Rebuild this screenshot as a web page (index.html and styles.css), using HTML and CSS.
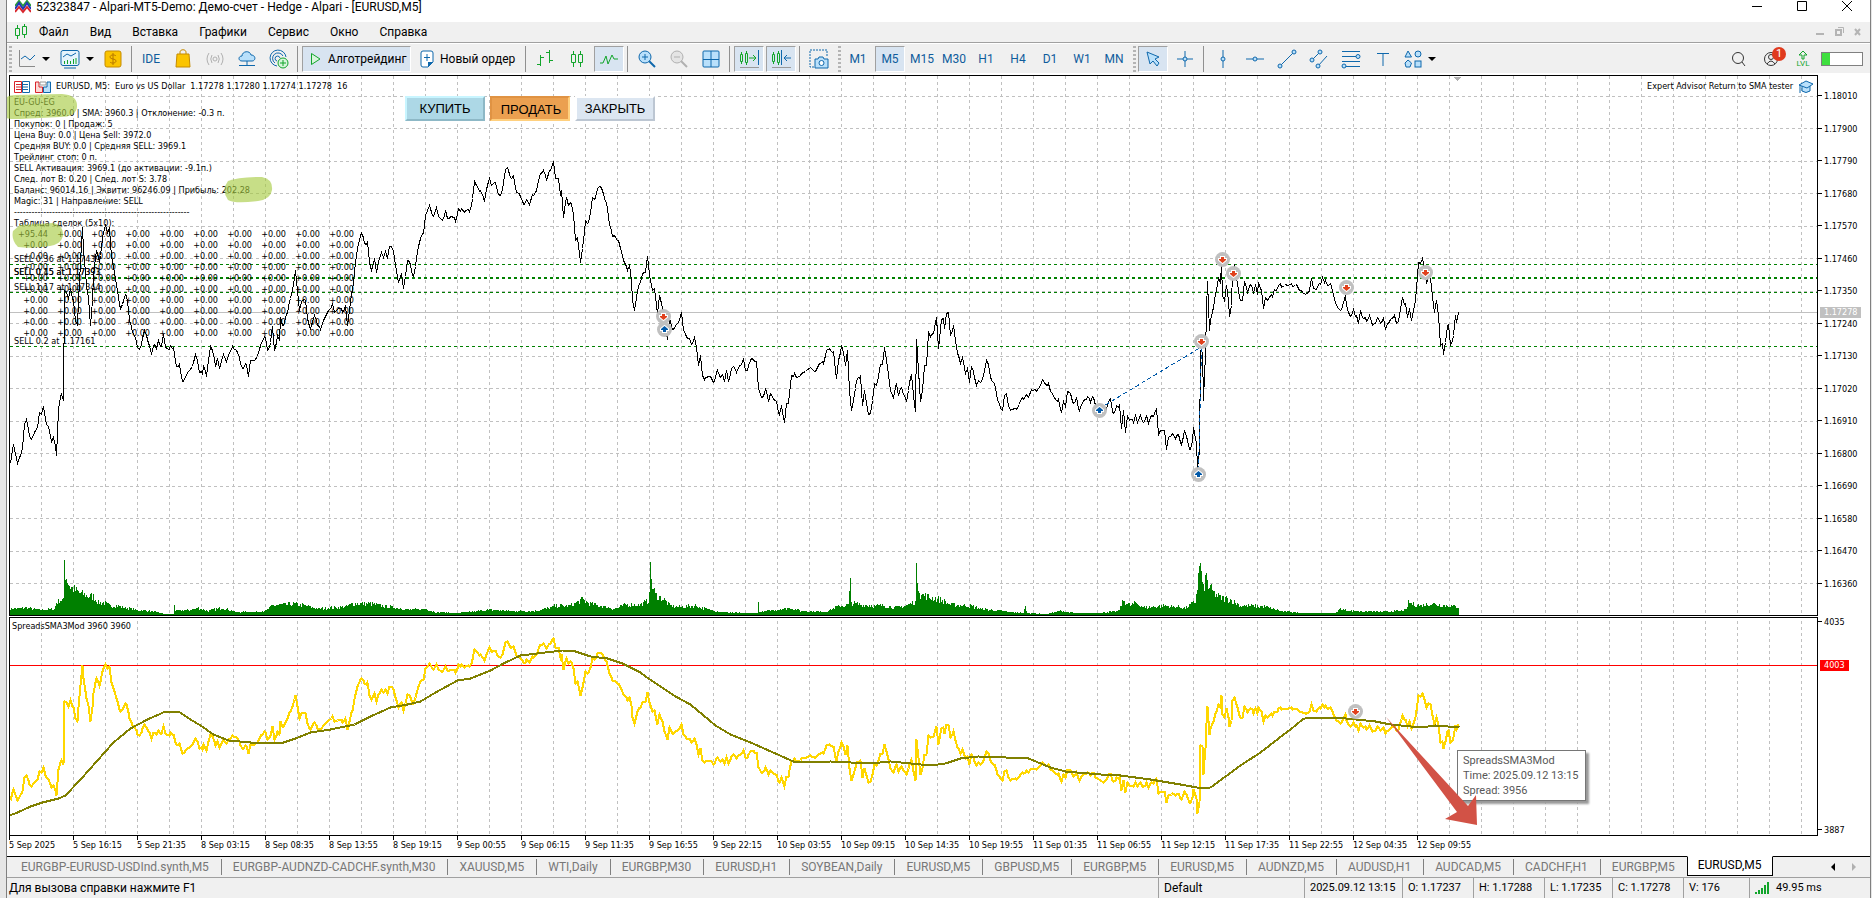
FILE: index.html
```html
<!DOCTYPE html>
<html lang="ru">
<head>
    <meta charset="UTF-8">
    <meta name="viewport" content="width=device-width, initial-scale=1.0">
    <title>52323847 - Alpari-MT5-Demo</title>
    <link rel="stylesheet" href="styles.css">
</head>
<body>
<div class="window">
    <header class="titlebar">
        <svg width="16" height="14" viewBox="0 0 16 14" fill="none" stroke-width="2">
            <path d="M0 6 L4 1 L8 6 L12 1 L16 6" stroke="#2a9d3a"/>
            <path d="M0 9 L4 3 L8 9 L12 3 L16 9" stroke="#2238b8"/>
            <path d="M0 12 L4 7 L8 12 L12 7 L16 12" stroke="#d8232a"/>
        </svg>
        <span class="title">52323847 - Alpari-MT5-Demo: Демо-счет - Hedge - Alpari - [EURUSD,M5]</span>
        <div class="window-buttons">
            <button type="button" aria-label="Свернуть"><svg width="12" height="12"><path d="M1 6.5H11" stroke="#000"/></svg></button>
            <button type="button" aria-label="Развернуть"><svg width="12" height="12"><path d="M1.500 1.500H10.500V10.500H1.500Z" stroke="#000" fill="none"/></svg></button>
            <button type="button" aria-label="Закрыть"><svg width="12" height="12"><path d="M1 1L11 11M11 1L1 11" stroke="#000"/></svg></button>
        </div>
    </header>

    <nav class="menu">
        <svg width="14" height="16" viewBox="0 0 14 16" fill="none" stroke="#12a52b"><path d="M3.500 1V4M3.500 12V15M1.500 4.500H5.500V11.500H1.500ZM10.500 0V2M10.500 11V14M8.500 2.500H12.500V10.500H8.500Z"/></svg>
        <a href="#">Файл</a>
        <a href="#">Вид</a>
        <a href="#">Вставка</a>
        <a href="#">Графики</a>
        <a href="#">Сервис</a>
        <a href="#">Окно</a>
        <a href="#">Справка</a>
        <svg class="mdi" width="48" height="12" viewBox="0 0 48 12" fill="none" stroke="#b4b4b4">
            <path d="M1 8H9" stroke-width="2"/>
            <path d="M21 4H26V9H21Z" stroke-width="2"/><path d="M23 1.500H28.500V7"/>
            <path d="M40 3L45 9M45 3L40 9" stroke-width="2"/>
        </svg>
    </nav>

    <div class="toolbar">
        <span class="grip"></span>
        <button type="button" class="drop" aria-label="Тип графика">
            <svg width="18" height="20" viewBox="0 0 18 20" fill="none"><path d="M1.500 1V17.500H17" stroke="#8a8a8a"/><path d="M3 10L7 7L12 11L17 6" stroke="#0f68ac"/></svg><i></i>
        </button>
        <button type="button" class="drop" aria-label="Индикаторы">
            <svg width="20" height="20" viewBox="0 0 20 20" fill="none"><rect x="1" y="1.500" width="18" height="15" rx="2" fill="#e6f3fc" stroke="#0f68ac"/><path d="M4 19H16" stroke="#0f68ac"/><path d="M3 8L7 5L11 7L16 4" stroke="#0f68ac"/><path d="M4.500 15V12M7.500 15V11M10.500 15V12M13.500 15V10M16 15V9" stroke="#12a52b"/></svg><i></i>
        </button>
        <button type="button" class="tool" aria-label="Депозит"><svg width="18" height="18" viewBox="0 0 18 18"><rect x="1" y="1" width="16" height="16" rx="2" fill="#fbc400" stroke="#c58b00"/><path d="M12 6C11 4.500 6 4.500 6 7C6 9.500 12 8.500 12 11C12 13.500 7 13.500 6 12M9 3V15" fill="none" stroke="#b57700"/></svg></button>
        <span class="sep"></span>
        <button type="button" class="tool label">IDE</button>
        <button type="button" class="tool" aria-label="Маркет"><svg width="16" height="20" viewBox="0 0 16 20"><path d="M5 7V3C5 0 11 0 11 3V7" fill="none" stroke="#c58b00"/><path d="M2 5H14L15 18H1Z" fill="#fbc400" stroke="#c58b00"/></svg></button>
        <button type="button" class="tool" aria-label="Сигналы"><svg width="18" height="14" viewBox="0 0 18 14" fill="none" stroke="#b0b0b0"><circle cx="9" cy="7" r="2"/><path d="M6 3Q3.500 7 6 11M12 3Q14.500 7 12 11M3 1Q-1 7 3 13M15 1Q19 7 15 13"/></svg></button>
        <button type="button" class="tool" aria-label="VPS"><svg width="18" height="18" viewBox="0 0 18 18" stroke="#0f68ac"><path d="M4 11C0 11 0 6 4 6C4 1 12 0 13 5C18 5 18 11 14 11Z" fill="#b9e0fb"/><path d="M9 11V15M1 15.500H17M7 15.500H11" fill="none"/></svg></button>
        <button type="button" class="tool" aria-label="Биржа"><svg width="20" height="20" viewBox="0 0 20 20" fill="none" stroke="#0f68ac"><path d="M8 17A8 8 0 1 1 17 8M6 14A5.500 5.500 0 1 1 14 7M8 12A2.500 2.500 0 1 1 11 9"/><circle cx="14" cy="14" r="5" fill="#d8f5dc" stroke="#12a52b"/><path d="M11 14H17M14 11V17" stroke="#12a52b"/></svg></button>
        <span class="sep"></span>
        <button type="button" class="wide active"><svg width="12" height="14" viewBox="0 0 12 14"><path d="M1.500 1.500L10 7L1.500 12.500Z" fill="#d8f5dc" stroke="#12a52b"/></svg>Алготрейдинг</button>
        <button type="button" class="wide"><svg width="14" height="18" viewBox="0 0 14 18"><path d="M1 3Q1 1 3 1H11Q13 1 13 3V12L8 17H3Q1 17 1 15Z" fill="#fff" stroke="#0f68ac"/><path d="M8 17V12H13Z" fill="#0f68ac"/><path d="M4 7.500H10M7 4V11" stroke="#0f68ac"/></svg>Новый ордер</button>
        <span class="sep"></span>
        <button type="button" class="tool" aria-label="Бары"><svg width="18" height="20" viewBox="0 0 18 20" fill="none" stroke="#12a52b"><path d="M4.500 6V17M1 15.500H4M5 8.500H8M13.500 1V14M10 3.500H13M14 11.500H17"/></svg></button>
        <button type="button" class="tool" aria-label="Свечи"><svg width="14" height="18" viewBox="0 0 14 18" fill="none" stroke="#12a52b"><path d="M3.500 1V4M3.500 13V17M1.500 4.500H5.500V12.500H1.500ZM10.500 1V4M10.500 13V17M8.500 4.500H12.500V12.500H8.500Z"/></svg></button>
        <button type="button" class="tool active" aria-label="Линия"><svg width="18" height="14" viewBox="0 0 18 14" fill="none" stroke="#12a52b"><path d="M0 11H3L6 4L8 12L12 3L14 7H18"/></svg></button>
        <span class="sep"></span>
        <button type="button" class="tool" aria-label="Увеличить"><svg width="18" height="18" viewBox="0 0 18 18" stroke="#0f68ac"><path d="M11 11L17 17" stroke-width="2"/><circle cx="7" cy="7" r="6" fill="#b9e0fb"/><path d="M4 7H10M7 4V10"/></svg></button>
        <button type="button" class="tool" aria-label="Уменьшить"><svg width="18" height="18" viewBox="0 0 18 18" stroke="#b0b0b0"><path d="M11 11L17 17" stroke-width="2"/><circle cx="7" cy="7" r="6" fill="#e4e4e4"/><path d="M4 7H10"/></svg></button>
        <button type="button" class="tool" aria-label="Окна"><svg width="18" height="18" viewBox="0 0 18 18" stroke="#0f68ac"><rect x="1" y="1" width="16" height="16" rx="1" fill="#b9e0fb"/><path d="M1 9.500H17M9 1V17"/></svg></button>
        <span class="sep"></span>
        <button type="button" class="tool active" aria-label="Автопрокрутка"><svg width="20" height="20" viewBox="0 0 20 20" fill="none"><path d="M1.500 5.500H3.500V12.500H1.500ZM2.500 3V5M2.500 13V15M6.500 4.500H8.500V13.500H6.500ZM7.500 2V4M7.500 14V16M10 9H17M14 6L17 9L14 12" stroke="#12a52b"/><path d="M19.500 1V16" stroke="#0f68ac"/><path d="M1 18.500H20" stroke="#999"/></svg></button>
        <button type="button" class="tool active" aria-label="Сдвиг"><svg width="20" height="20" viewBox="0 0 20 20" fill="none"><path d="M1.500 5.500H3.500V12.500H1.500ZM2.500 3V5M2.500 13V15M6.500 4.500H8.500V13.500H6.500ZM7.500 2V4M7.500 14V16" stroke="#12a52b"/><path d="M10.500 1V16M13 9H20M16 6L13 9L16 12" stroke="#0f68ac"/><path d="M1 18.500H20" stroke="#999"/></svg></button>
        <span class="sep"></span>
        <button type="button" class="tool" aria-label="Снимок"><svg width="20" height="20" viewBox="0 0 20 20" fill="none" stroke="#0f68ac"><path d="M5 18H1V1H18V7" stroke-dasharray="2 1"/><path d="M6 10H9L10 8H14L15 10H19V19H6Z" fill="#b9e0fb"/><circle cx="12.500" cy="14" r="2.500" fill="#fff"/></svg></button>
        <span class="grip"></span>
        <button type="button" class="tool label">M1</button>
        <button type="button" class="tool label active">M5</button>
        <button type="button" class="tool label">M15</button>
        <button type="button" class="tool label">M30</button>
        <button type="button" class="tool label">H1</button>
        <button type="button" class="tool label">H4</button>
        <button type="button" class="tool label">D1</button>
        <button type="button" class="tool label">W1</button>
        <button type="button" class="tool label">MN</button>
        <span class="grip"></span>
        <button type="button" class="tool active" aria-label="Курсор"><svg width="14" height="16" viewBox="0 0 14 16"><path d="M1 1L13 6L9 8L13 12L11 15L7 10L4 13Z" fill="#b9e0fb" stroke="#0f68ac"/></svg></button>
        <button type="button" class="tool" aria-label="Перекрестие"><svg width="18" height="18" viewBox="0 0 18 18" stroke="#0f68ac"><path d="M1 9H17M9 1V17"/><circle cx="9" cy="9" r="2" fill="#b9e0fb"/></svg></button>
        <span class="sep"></span>
        <button type="button" class="tool" aria-label="Вертикальная линия"><svg width="18" height="18" viewBox="0 0 18 18" stroke="#0f68ac"><path d="M9 0V18"/><circle cx="9" cy="9" r="2" fill="#b9e0fb"/></svg></button>
        <button type="button" class="tool" aria-label="Горизонтальная линия"><svg width="18" height="18" viewBox="0 0 18 18" stroke="#0f68ac"><path d="M0 9H18"/><circle cx="9" cy="9" r="2" fill="#b9e0fb"/></svg></button>
        <button type="button" class="tool" aria-label="Трендовая линия"><svg width="20" height="20" viewBox="0 0 20 20" stroke="#0f68ac"><path d="M3 17L17 3"/><circle cx="3" cy="17" r="2" fill="#b9e0fb"/><circle cx="17" cy="3" r="2" fill="#b9e0fb"/></svg></button>
        <button type="button" class="tool" aria-label="Канал"><svg width="20" height="20" viewBox="0 0 20 20" stroke="#0f68ac"><path d="M3 11L11 3M9 17L18 7"/><circle cx="3" cy="11" r="2" fill="#b9e0fb"/><circle cx="11" cy="3" r="2" fill="#b9e0fb"/><circle cx="9" cy="17" r="2" fill="#b9e0fb"/></svg></button>
        <button type="button" class="tool" aria-label="Фибоначчи"><svg width="20" height="20" viewBox="0 0 20 20" stroke="#0f68ac"><path d="M1 2.500H19M1 7.500H19M1 12.500H19M1 17.500H19"/><circle cx="17" cy="7.500" r="2" fill="#b9e0fb"/><circle cx="3" cy="17" r="2" fill="#b9e0fb"/></svg></button>
        <button type="button" class="tool" aria-label="Текст"><svg width="14" height="14" viewBox="0 0 14 14" stroke="#0f68ac"><path d="M1 1.500H13M7 1V14"/></svg></button>
        <button type="button" class="drop" aria-label="Фигуры"><svg width="18" height="20" viewBox="0 0 18 20" fill="#b9e0fb" stroke="#0f68ac"><path d="M4 2L7.500 8H1Z"/><circle cx="14" cy="5" r="3"/><path d="M4 11L7.500 14L6 18H2L1 14Z"/><rect x="11" y="12" width="6" height="6"/></svg><i></i></button>

        <div class="toolbar-right">
            <button type="button" class="tool" aria-label="Поиск"><svg width="16" height="16" viewBox="0 0 16 16" fill="none" stroke="#333"><circle cx="7" cy="7" r="5.500"/><path d="M11 11L14 15"/></svg></button>
            <button type="button" class="tool account" aria-label="Аккаунт"><svg width="16" height="16" viewBox="0 0 16 16" fill="none" stroke="#333"><circle cx="8" cy="8" r="6.500"/><circle cx="8" cy="6" r="2.500"/><path d="M4 13Q8 7 12 13"/></svg><b>1</b></button>
            <button type="button" class="tool level"><svg width="10" height="10" viewBox="0 0 10 10" fill="none" stroke="#12a52b"><path d="M5 1L9 5H6V9H4V5H1Z"/></svg>LVL</button>
            <span class="battery"><span></span></span>
        </div>
    </div>

    <main class="chart">
        <section class="pane price">
            <svg class="plot" id="pricePlot"></svg>
            <div class="pane-head">
                <svg width="16" height="12" viewBox="0 0 16 12"><path d="M.5.500H7.500V11.500H.5Z" fill="#fff" stroke="#d8232a"/><path d="M8.500.500H15.500V11.500H8.500Z" fill="#fff" stroke="#0f68ac"/><path d="M2 3.500H7M2 6H7M2 8.500H7" stroke="#d8232a"/><path d="M9 3.500H14M9 6H14M9 8.500H14" stroke="#0f68ac"/></svg>
                <svg width="16" height="12" viewBox="0 0 16 12"><path d="M.5 1H4V6H7.500V11.500H.5Z" fill="#fbd9d6" stroke="#d8232a"/><path d="M15.500 1H12V6H8.500V11.500H15.500Z" fill="#b9e0fb" stroke="#0f68ac"/><path d="M5 1H11V4H5Z" fill="#fff" stroke="#999"/></svg>
                <span class="symbol">EURUSD, M5:&nbsp; Euro vs US Dollar&nbsp; 1.17278 1.17280 1.17274 1.17278&nbsp; 16</span>
                <span class="expert">Expert Advisor Return to SMA tester</span>
                <svg width="16" height="14" viewBox="0 0 16 14" stroke="#0f68ac" fill="#b9e0fb"><path d="M4 6V11Q8 14 12 11V6"/><path d="M1 5L8 1L15 4L9 8Z"/><path d="M2 5V13" fill="none"/></svg>
            </div>
            <div class="comment">
                <p>EU-GU-EG</p>
                <p>Спред: 3960.0 | SMA: 3960.3 | Отклонение: -0.3 п.</p>
                <p>Покупок: 0 | Продаж: 5</p>
                <p>Цена Buy: 0.0 | Цена Sell: 3972.0</p>
                <p>Средняя BUY: 0.0 | Средняя SELL: 3969.1</p>
                <p>Трейлинг стоп: 0 п.</p>
                <p>SELL Активация: 3969.1 (до активации: -9.1п.)</p>
                <p>След. лот B: 0.20 | След. лот S: 3.78</p>
                <p>Баланс: 96014.16 | Эквити: 96246.09 | Прибыль: 202.28</p>
                <p>Magic: 31 | Направление: SELL</p>
                <p>------------------------------------------------------------</p>
                <p>Таблица сделок (5x10):</p>
                <table id="deals"></table>
            </div>
            <div class="trade">
                <button type="button" class="buy">КУПИТЬ</button>
                <button type="button" class="sell">ПРОДАТЬ</button>
                <button type="button" class="close">ЗАКРЫТЬ</button>
            </div>
        </section>
        <div class="axis price-axis">
            <span>1.18010</span><span>1.17900</span><span>1.17790</span><span>1.17680</span>
            <span>1.17570</span><span>1.17460</span><span>1.17350</span><span>1.17240</span>
            <span>1.17130</span><span>1.17020</span><span>1.16910</span><span>1.16800</span>
            <span>1.16690</span><span>1.16580</span><span>1.16470</span><span>1.16360</span>
            <b class="bid">1.17278</b>
        </div>
        <section class="pane spread">
            <svg class="plot" id="spreadPlot"></svg>
            <p class="indicator-name">SpreadsSMA3Mod 3960 3960</p>
            <div class="tooltip">SpreadsSMA3Mod<br>Time: 2025.09.12 13:15<br>Spread: 3956</div>
            <svg class="pointer" width="94" height="110" viewBox="0 0 94 110"><path d="M1 1L83 90L91 79L92 109L60 103L72 96Z" fill="#d25246"/></svg>
        </section>
        <div class="axis spread-axis">
            <span>4035</span><span>3887</span>
            <b class="level-mark">4003</b>
        </div>
        <div class="time-axis" id="timeAxis"></div>
        <svg class="marks" width="280" height="170" viewBox="0 0 280 170" fill="#a6cb3e" opacity="0.620">
            <path d="M6 9Q3 1 16 1L62 0Q78 1 77 13Q76 23 60 23L20 25Q0 26 1 18Z"/>
            <path d="M228 87Q238 83 262 83Q273 85 272 96Q271 105 258 107Q235 110 228 106Q221 96 228 87Z"/>
            <path d="M20 131L54 129Q64 132 63 142Q61 150 50 152Q32 155 18 153Q11 146 13 137Z"/>
        </svg>
    </main>

    <nav class="tabs">
        <a href="#">EURGBP-EURUSD-USDInd.synth,M5</a>
        <a href="#">EURGBP-AUDNZD-CADCHF.synth,M30</a>
        <a href="#">XAUUSD,M5</a>
        <a href="#">WTI,Daily</a>
        <a href="#">EURGBP,M30</a>
        <a href="#">EURUSD,H1</a>
        <a href="#">SOYBEAN,Daily</a>
        <a href="#">EURUSD,M5</a>
        <a href="#">GBPUSD,M5</a>
        <a href="#">EURGBP,M5</a>
        <a href="#">EURUSD,M5</a>
        <a href="#">AUDNZD,M5</a>
        <a href="#">AUDUSD,H1</a>
        <a href="#">AUDCAD,M5</a>
        <a href="#">CADCHF,H1</a>
        <a href="#">EURGBP,M5</a>
        <a href="#" class="current">EURUSD,M5</a>
        <svg width="28" height="8" viewBox="0 0 28 8"><path d="M5 0V8L1 4Z"/><path d="M22 0V8L26 4Z" fill="#b0b0b0"/></svg>
    </nav>

    <footer class="status">
        <span class="help">Для вызова справки нажмите F1</span>
        <span class="profile">Default</span>
        <span class="value w98">2025.09.12 13:15</span>
        <span class="value w71">O: 1.17237</span>
        <span class="value w71">H: 1.17288</span>
        <span class="value w68">L: 1.17235</span>
        <span class="value w71">C: 1.17278</span>
        <span class="value w66">V: 176</span>
        <span class="value ping"><svg width="14" height="12" viewBox="0 0 14 12" stroke="#12a52b" stroke-width="2"><path d="M1 12V10M4 12V8M7 12V6M10 12V3M13 12V0"/></svg>49.95 ms</span>
    </footer>
</div>
<script src="chart.js"></script>
</body>
</html>
```
FILE: styles.css
```css
* {
    box-sizing: border-box;
}
body {
    margin: 0;
    background: #e6e6e6;
    font-family: Roboto, "Open Sans", sans-serif;
    font-size: 12px;
    color: #000;
}
button {
    padding: 0;
    border: 0;
    background: none;
    font: inherit;
}
a {
    color: inherit;
    text-decoration: none;
}
p {
    margin: 0;
}
.window {
    display: flex;
    flex-direction: column;
    min-height: 100vh;
    margin: 0 1px 0 6px;
    border-left: 1px solid #808080;
    border-right: 1px solid #808080;
    background: #fff;
    overflow: hidden;
}

/* title and menu */
.titlebar {
    display: flex;
    height: 22px;
    padding-left: 8px;
}
.title {
    margin-left: 5px;
    line-height: 14px;
}
.window-buttons {
    display: flex;
    gap: 33px;
    margin-left: auto;
    padding-right: 17px;
}
.window-buttons button {
    width: 12px;
    height: 12px;
}
.window-buttons svg {
    display: block;
}
.menu {
    display: flex;
    align-items: center;
    gap: 21px;
    height: 21px;
    padding: 0 7px 0 7px;
    border-bottom: 1px solid #a0a0a0;
    background: #f0f0f0;
    line-height: 20px;
}
.menu svg:first-child {
    margin-right: -10px;
}
.mdi {
    margin-left: auto;
}

/* toolbar */
.toolbar {
    display: flex;
    align-items: center;
    gap: 2px;
    height: 30px;
    margin-bottom: 2px;
    padding: 0 7px 0 2px;
    border-top: 1px solid #fff;
    background: #f0f0f0;
}
.toolbar svg {
    display: block;
    flex: none;
}
.grip {
    width: 3px;
    height: 26px;
    background: repeating-linear-gradient(#b4b4b4 0 2px, transparent 2px 4px);
}
.tool + .grip {
    margin-left: 2px;
}
.sep {
    width: 1px;
    height: 26px;
    margin: 0 2px 0 1px;
    background: #909090;
}
.tool {
    display: flex;
    flex: none;
    align-items: center;
    justify-content: center;
    width: 30px;
    height: 26px;
}
.label {
    color: #0f5c9c;
}
.active {
    background: #d8e4f1;
    border: 1px solid #fff;
    border-top-color: #a0a0a0;
    border-left-color: #a0a0a0;
}
.drop {
    display: flex;
    align-items: center;
    gap: 6px;
    width: 40px;
    padding-left: 4px;
}
.drop i {
    border: 4px solid transparent;
    border-top-color: #000;
    border-bottom: 0;
}
.wide {
    display: flex;
    flex: none;
    align-items: center;
    gap: 6px;
    width: 109px;
    height: 26px;
    padding: 0 0 0 7px;
    white-space: nowrap;
}
.toolbar-right {
    display: flex;
    align-items: center;
    gap: 2px;
    margin-left: auto;
}
.account {
    position: relative;
}
.account b {
    position: absolute;
    top: 1px;
    right: 0;
    width: 14px;
    border-radius: 7px;
    background: #e03a1e;
    color: #fff;
    font-size: 11px;
    font-weight: normal;
    line-height: 14px;
}
.level {
    flex-direction: column;
    color: #12a52b;
    font-size: 8px;
    line-height: 8px;
}
.battery {
    width: 42px;
    height: 14px;
    margin-left: 1px;
    border: 1px solid #808080;
    background: #fff;
}
.battery span {
    display: block;
    width: 8px;
    height: 12px;
    background: #3fe03f;
}

/* chart */
.chart {
    position: relative;
    display: grid;
    flex: 1;
    grid-template-columns: 1fr 52px;
    grid-template-rows: 541fr 219fr 19px;
    row-gap: 1px;
    padding-left: 2px;
    font-family: "DejaVu Sans Condensed", "DejaVu Sans", sans-serif;
    font-size: 9px;
    line-height: 11px;
}
.pane {
    position: relative;
    border: 1px solid #000;
}
.plot {
    position: absolute;
    width: 100%;
    height: 100%;
    shape-rendering: crispEdges;
}
.plot .grid {
    stroke: #c0c0c0;
    stroke-dasharray: 3 3;
}
.plot .order {
    stroke: #008000;
    stroke-dasharray: 3 3;
}
.plot .bid-line {
    stroke: #c0c0c0;
}
.plot .volume {
    stroke: #008000;
}
.plot polyline {
    fill: none;
}
.plot .quote {
    stroke: #000;
}
.plot .deal {
    stroke: #0058a8;
    stroke-dasharray: 4 3;
}
.plot .spread-line {
    stroke: #ffd700;
    stroke-width: 2;
}
.plot .sma {
    stroke: #808000;
    stroke-width: 2;
}
.plot .stop {
    stroke: #f00;
}
.pane-head {
    position: relative;
    display: flex;
    align-items: center;
    gap: 5px;
    height: 21px;
    padding: 0 3px 0 4px;
}
.expert {
    margin-left: auto;
}
.comment {
    position: relative;
    padding-left: 4px;
}
.comment p {
    white-space: nowrap;
}
.comment table {
    border-collapse: collapse;
}
.comment td {
    width: 34px;
    padding: 0;
    line-height: 11px;
    text-align: right;
}
.comment tr:first-child td {
    padding-left: 2px;
}
.trade {
    position: absolute;
    top: 20px;
    left: 395px;
    display: flex;
    gap: 5px;
}
.trade button {
    width: 80px;
    height: 25px;
    border: 2px solid;
    font-family: "Liberation Sans", Arial, sans-serif;
    font-size: 13px;
}
.trade .buy {
    background: #add8e6;
    border-color: #c8f5ff #8db8c6 #8db8c6 #c8f5ff;
}
.trade .sell {
    padding: 2px 0 0 2px;
    background: #eba050;
    border-color: #e09343 #ffd07e #ffd07e #e09343;
}
.trade .close {
    background: #dce6f1;
    border-color: #fff #bcc6d2 #bcc6d2 #fff;
}
.axis {
    position: relative;
    display: flex;
    flex-direction: column;
    justify-content: space-between;
    white-space: nowrap;
}
.axis span::before {
    display: inline-block;
    width: 4px;
    height: 1px;
    margin-right: 2px;
    background: #000;
    vertical-align: 3px;
    content: "";
}
.price-axis {
    padding: 16px 0 26px;
}
.axis b {
    position: absolute;
    left: 2px;
    padding: 0 4px;
    color: #fff;
    font-weight: normal;
}
.bid {
    top: 232px;
    background: #c0c0c0;
}
.level-mark {
    top: 43px;
    background: #f00;
}
.indicator-name {
    position: relative;
    padding: 3px 2px;
}
.tooltip {
    position: absolute;
    top: 132px;
    left: 1447px;
    padding: 2px 6px 2px 5px;
    border: 1px solid #767676;
    background: #fff;
    box-shadow: 3px 3px 2px #999;
    color: #575757;
    font-family: Roboto, "Open Sans", sans-serif;
    font-size: 11px;
    line-height: 15px;
    white-space: nowrap;
}
.pointer {
    position: absolute;
    top: 98px;
    left: 1375px;
}
.time-axis {
    display: flex;
    grid-column: 1 / 3;
    margin-top: -1px;
}
.time-axis span {
    flex: none;
    width: 64px;
    padding-top: 4px;
    background: linear-gradient(#000, #000) 0 0 / 1px 4px no-repeat;
    white-space: nowrap;
}
.marks {
    position: absolute;
    top: 19px;
    left: -7px;
}

/* tabs and status bar */
.tabs {
    display: flex;
    align-items: center;
    height: 22px;
    padding-left: 3px;
    border-top: 1px solid #000;
    border-bottom: 1px solid #a0a0a0;
    background: #f0f0f0;
    color: #777;
    line-height: 16px;
}
.tabs a {
    padding: 0 12px 0 11px;
    border-right: 1px solid #808080;
    white-space: nowrap;
}
.tabs .current {
    align-self: flex-start;
    padding: 0 10px 2px;
    margin: -1px 0 0 -1px;
    border: 1px solid #000;
    border-top-color: #fff;
    background: #fff;
    color: #000;
}
.tabs svg {
    margin-left: auto;
    margin-right: 12px;
}
.status {
    display: flex;
    height: 20px;
    background: #f0f0f0;
    line-height: 20px;
    white-space: nowrap;
}
.status span {
    padding-left: 5px;
    border-left: 1px solid #a0a0a0;
}
.status .help {
    flex: 1;
    padding-left: 2px;
    border: 0;
}
.value {
    font-size: 11px;
}
.profile {
    width: 146px;
}
.w98 {
    width: 98px;
}
.w71 {
    width: 71px;
}
.w68 {
    width: 68px;
}
.w66 {
    width: 66px;
}
.ping {
    display: flex;
    align-items: center;
    gap: 7px;
    width: 121px;
}
```
FILE: chart.js
```js
const NS = 'http://www.w3.org/2000/svg';
const TOP = 76;         // screen y of the price pane
const SUB_TOP = 618;    // screen y of the spread pane
const LEFT = 10;

function draw(svg, tag, attrs) {
    const el = document.createElementNS(NS, tag);
    for (const name in attrs) el.setAttribute(name, attrs[name]);
    svg.appendChild(el);
    return el;
}

function parse(text) {
    return text.trim().split(/\s+/).map(p => p.split(',').map(Number));
}

// x,y pairs of the close line
const quotes = parse(`
10,463 13,444 17,463 22,447 24,424 26,419 29,436 31,439 35,430 37,427 39,412 41,414 43,406 46,424 48,426 51,441 53,437 56,455 58,409 60,396 61,394 63,400
64,290 66,292 68,298 70,288 73,300 75,320 77,325 78,300 80,262 82,227 83,250 86,285 88,297 90,325 92,300 93,275 96,250 99,262 100,255 103,232 105,225 107,232 109,228
111,256 114,272 117,290 120,308 123,300 126,295 129,320 132,332 134,335 137,347 139,349 142,338 144,330 146,335 149,345 151,354 154,344 156,348 158,340 161,346 163,334
166,348 170,345 173,347 176,366 179,364 182,381 185,376 189,370 193,362 195,354 197,360 199,372 202,374 203,365 206,376 208,360 210,346 212,350 215,366 217,358 219,368
223,354 226,361 230,351 233,348 237,352 240,363 243,368 246,364 248,376 250,360 254,360 258,352 262,341 265,337 267,350 270,342 272,326 274,350 277,335 279,340 280,317
283,325 287,312 290,298 292,290 295,270 297,290 299,310 302,300 305,300 307,318 310,328 314,315 317,325 320,329 324,318 328,310 332,303 334,312 338,308 342,312 345,305
347,325 349,310 352,290 355,262 357,248 361,233 364,243 367,241 369,262 371,270 374,258 376,272 379,258 381,252 383,257 385,251 387,258 389,246 391,246 393,251 396,270
398,282 401,274 403,288 405,276 407,260 410,265 413,276 416,258 418,246 420,238 423,233 425,215 427,210 429,205 433,216 436,207 438,216 442,220 445,210 447,218 450,216
455,221 458,208 461,208 465,210 469,211 472,198 474,181 477,186 480,190 484,201 486,189 489,178 492,184 495,182 498,194 500,195 503,182 505,169 507,167 511,178 513,175
516,192 520,197 523,204 526,199 529,204 533,195 536,190 540,173 543,170 546,180 550,170 553,161 555,178 558,178 560,195 561,190 563,217 566,197 568,205 571,204 573,214
575,240 577,237 580,262 582,248 585,220 588,222 590,212 592,197 595,197 597,188 600,186 603,194 606,202 609,224 612,236 615,237 618,240 621,251 624,262 627,270 629,265
631,280 632,300 634,310 637,290 640,282 643,272 645,272 647,256 650,280 652,290 654,288 657,313 659,295 662,308 664,325 667,339 669,318 673,329 677,323 679,320 681,312
683,330 686,337 689,338 692,343 694,337 696,347 698,365 700,355 702,375 705,377 710,376 714,381 717,370 720,377 722,374 724,381 726,370 728,381 731,368 733,366 736,372
740,365 743,358 745,370 748,365 751,358 754,361 756,361 758,388 762,397 765,388 768,401 770,393 773,399 776,401 779,414 781,405 784,422 786,403 788,403 789,393 791,375
794,373 797,377 801,373 806,370 811,368 815,371 820,363 823,363 826,350 830,350 833,351 836,378 838,360 841,345 843,352 845,365 847,350 849,390 851,410 853,400 856,380
859,378 860,376 862,405 864,390 866,402 868,414 870,413 872,400 874,383 876,385 878,376 880,364 882,364 884,347 886,360 888,374 890,390 893,397 896,383 898,395 901,387
904,395 906,401 909,382 911,374 913,395 915,411 916,339 918,370 920,401 922,390 924,365 926,365 928,332 931,334 933,333 936,317 938,348 941,319 943,318 944,328 946,313
948,312 950,335 953,325 955,340 958,355 960,363 962,357 965,373 967,368 969,382 971,366 974,377 976,385 978,380 980,382 983,375 985,365 986,360 988,364 991,380 994,383
997,400 1000,408 1002,410 1004,395 1006,393 1008,405 1011,409 1016,409 1020,400 1023,399 1026,394 1028,397 1032,390 1036,391 1038,388 1040,385 1042,379 1045,384
1048,383 1051,392 1055,399 1058,399 1061,412 1063,401 1065,406 1067,391 1070,393 1073,403 1076,397 1079,410 1081,404 1084,399 1087,396 1090,402 1093,397 1095,405
1097,407 1104,412 1107,405 1110,398 1113,413 1116,405 1119,405 1121,428 1123,410 1125,432 1127,415 1130,419 1133,422 1135,415 1137,422 1140,415 1143,422 1146,415
1148,423 1151,415 1154,413 1156,408 1158,434 1160,430 1164,430 1166,449 1168,437 1172,433 1175,438 1178,434 1181,444 1184,430 1187,440 1190,449 1192,441 1193,427
1195,438 1196,443 1197,468 1199,450 1200,350 1202,352 1203,400 1204,375 1205,355 1206,310 1207,281 1209,330 1210,320 1213,307 1216,290 1218,277 1220,283 1221,262
1222,295 1224,300 1226,285 1228,300 1229,316 1231,305 1232,270 1234,265 1237,283 1240,300 1242,300 1244,281 1247,292 1250,284 1253,293 1255,284 1257,294 1258,282
1261,290 1263,308 1265,297 1268,298 1272,296 1275,290 1278,285 1281,287 1285,284 1288,285 1292,286 1296,284 1299,290 1302,292 1306,293 1309,290 1311,278 1313,288
1317,286 1320,284 1322,277 1325,280 1328,285 1330,283 1333,295 1336,305 1338,308 1341,309 1343,302 1345,295 1346,305 1348,312 1350,316 1353,309 1356,315 1358,323
1360,310 1363,318 1366,321 1369,315 1372,325 1375,323 1378,318 1381,322 1383,318 1385,329 1388,323 1391,318 1394,315 1396,323 1399,315 1401,303 1402,297 1405,303
1407,317 1409,308 1411,320 1413,310 1415,300 1417,275 1418,262 1420,263 1422,258 1424,268 1426,283 1428,275 1430,278 1432,296 1434,312 1436,300 1438,315 1440,345
1442,343 1443,354 1445,342 1447,325 1448,324 1450,345 1453,335 1455,315 1456,322 1458,312`);

const sma = parse(`
9,815 17,812 30,806 42,802 58,798 65,795 80,779 97,760 113,742 130,728 147,719 165,711 178,711 190,719 200,725 213,734 228,740 250,742 283,742 295,738 310,732
330,729 354,724 370,716 390,707 407,704 420,701 435,692 457,680 470,678 490,670 505,662 520,655 545,652 562,650 572,650 590,656 607,658 622,663 640,672 648,678
675,696 690,704 715,725 730,734 750,742 775,753 795,762 830,761 870,763 890,761 930,765 945,763 960,758 978,756 1005,757 1028,758 1050,767 1065,771 1100,774
1120,775 1150,779 1180,784 1202,788 1210,787 1225,776 1240,765 1260,752 1278,738 1290,729 1302,719 1307,717 1335,717 1355,719 1375,721 1390,724 1410,726
1420,727 1435,725 1459,727`);

// x,height pairs of the tick volume
const volume = parse(`
10,6 25,7 40,5 54,6 56,12 60,15 63,14 64,53 65,40 68,31 70,27 74,25 78,22 83,20 88,18 93,18 98,12 103,12 110,9 118,9 125,7 135,5 150,4 160,2 166,1 173,1 174,11
175,4 190,5 198,7 208,4 222,7 235,3 255,3 265,4 272,9 285,10 294,11 305,9 318,6 330,7 345,8 352,11 360,11 372,11 380,9 397,7 410,5 425,6 435,3 455,2 470,3
485,5 515,4 535,4 550,7 555,9 570,9 582,15 590,11 600,9 615,6 625,10 640,10 648,14 650,43 652,28 655,20 665,14 670,9 680,8 695,9 705,6 720,3 740,2 757,2 758,11
759,3 790,7 800,4 825,3 832,6 836,8 848,10 850,31 851,12 860,10 875,9 885,9 895,7 905,9 915,13 916,42 918,30 920,20 930,17 940,15 950,10 970,9 980,6 1000,4
1010,3 1023,2 1025,8 1027,2 1047,1 1060,4 1075,2 1100,2 1118,4 1123,14 1130,9 1135,12 1145,7 1165,9 1185,7 1195,13 1197,28 1200,54 1201,38 1203,25 1206,38
1208,28 1215,20 1220,17 1230,15 1240,9 1250,9 1265,8 1280,4 1300,2 1335,2 1340,6 1350,4 1380,3 1400,4 1406,5 1408,12 1420,9 1430,11 1440,10 1458,8`);

function valueAt(points, x) {
    let i = 1;
    while (i < points.length - 1 && points[i][0] < x) i++;
    const [x0, y0] = points[i - 1];
    const [x1, y1] = points[i];
    return y0 + (y1 - y0) * (x - x0) / (x1 - x0);
}

let seed = 7;
function random() {
    seed = (seed * 16807) % 2147483647;
    return seed / 2147483647;
}

function polyline(svg, points, top, cls) {
    draw(svg, 'polyline', {
        class: cls,
        points: points.map(([x, y]) => (x - LEFT + 0.5) + ',' + (y - top + 0.5)).join(' ')
    });
}

function hline(svg, y, cls) {
    return draw(svg, 'line', { x1: 0, x2: '100%', y1: y + 0.5, y2: y + 0.5, class: cls });
}

function marker(svg, x, y, top, up) {
    const g = draw(svg, 'g', {
        transform: 'translate(' + (x - LEFT + 0.5) + ' ' + (y - top + 0.5) + ')' + (up ? ' scale(1 -1)' : ''),
        'shape-rendering': 'auto'
    });
    draw(g, 'circle', { r: 7.5, fill: '#c0c0c0' });
    draw(g, 'path', { d: 'M-1.5 -2.5H1.5V-0.5H3.5V0.5L0 3.5L-3.5 0.5V-0.5H-1.5Z', fill: up ? '#0058a8' : '#e0401c', stroke: '#fff', 'stroke-width': 2, 'paint-order': 'stroke' });
}

const price = document.getElementById('pricePlot');
const spread = document.getElementById('spreadPlot');

for (let x = 31; x < 3000; x += 32) {
    draw(price, 'line', { x1: x + 0.5, x2: x + 0.5, y1: 0, y2: '100%', class: 'grid' });
    draw(spread, 'line', { x1: x + 0.5, x2: x + 0.5, y1: 3, y2: '100%', class: 'grid' });
}
for (let i = 0; i < 16; i++) hline(price, Math.round(20 + i * 32.47), 'grid');

// tick volume sits on the bottom edge of the pane
for (let x = LEFT; x <= 1458; x++) {
    const h = Math.max(1, Math.round(valueAt(volume, x) * (0.8 + 0.45 * random())));
    draw(price, 'line', { x1: x - LEFT + 0.5, x2: x - LEFT + 0.5, y1: 539 - h, y2: 539, class: 'volume' });
}

hline(price, 236, 'bid-line');
[188, 201, 202, 216, 270].forEach(y => hline(price, y, 'order'));

const quoteLine = [];
quotes.forEach(([x, y], i) => {
    if (i && x - quotes[i - 1][0] > 2) {
        const mid = x - 1;
        quoteLine.push([mid, Math.round(valueAt(quotes, mid) + random() * 6 - 3)]);
    }
    quoteLine.push([x, y]);
});
polyline(price, quoteLine, TOP, 'quote');
polyline(price, [[1099, 408], [1200, 347]], TOP, 'deal');
polyline(price, [[1198, 470], [1201, 347]], TOP, 'deal');
draw(price, 'path', { d: 'M1443 1H1451L1447 5Z', fill: '#b0b0b0' });

[[663, 316], [1201, 341], [1222, 259], [1233, 273], [1346, 287], [1425, 272]].forEach(([x, y]) => marker(price, x, y, TOP, false));
[[664, 329], [1099, 410], [1198, 474]].forEach(([x, y]) => marker(price, x, y, TOP, true));

[['SELL 0.36 at 1.17439', 262], ['SELL 0.45 at 1.17393', 275], ['SELL 0.15 at 1.17391', 275], ['SELL 1.17 at 1.17344', 290], ['SELL 0.2 at 1.17161', 344]]
    .forEach(([text, y]) => { draw(price, 'text', { x: 4, y: y - TOP }).textContent = text; });

// the synthetic spread follows the quote, a little higher in the first days
const spreadLine = quoteLine.map(([x, y]) => {
    const shift = x < 200 ? -10 : x < 380 ? -10 + (x - 200) / 18 : 0;
    return [x, Math.round(637 + (y - 160) * 0.57 + shift)];
});
hline(spread, 47, 'stop');
polyline(spread, spreadLine, SUB_TOP, 'spread-line');
polyline(spread, sma, SUB_TOP, 'sma');
marker(spread, 1355, 711, SUB_TOP, false);

const deals = document.getElementById('deals');
for (let r = 0; r < 10; r++) {
    const row = deals.insertRow();
    for (let c = 0; c < 10; c++) row.insertCell().textContent = r + c === 0 ? '+95.44' : '+0.00';
}

['5 Sep 2025', '5 Sep 16:15', '5 Sep 21:35', '8 Sep 03:15', '8 Sep 08:35', '8 Sep 13:55', '8 Sep 19:15', '9 Sep 00:55',
    '9 Sep 06:15', '9 Sep 11:35', '9 Sep 16:55', '9 Sep 22:15', '10 Sep 03:55', '10 Sep 09:15', '10 Sep 14:35', '10 Sep 19:55',
    '11 Sep 01:35', '11 Sep 06:55', '11 Sep 12:15', '11 Sep 17:35', '11 Sep 22:55', '12 Sep 04:35', '12 Sep 09:55'
].forEach(label => {
    const span = document.createElement('span');
    span.textContent = label;
    document.getElementById('timeAxis').appendChild(span);
});
```
